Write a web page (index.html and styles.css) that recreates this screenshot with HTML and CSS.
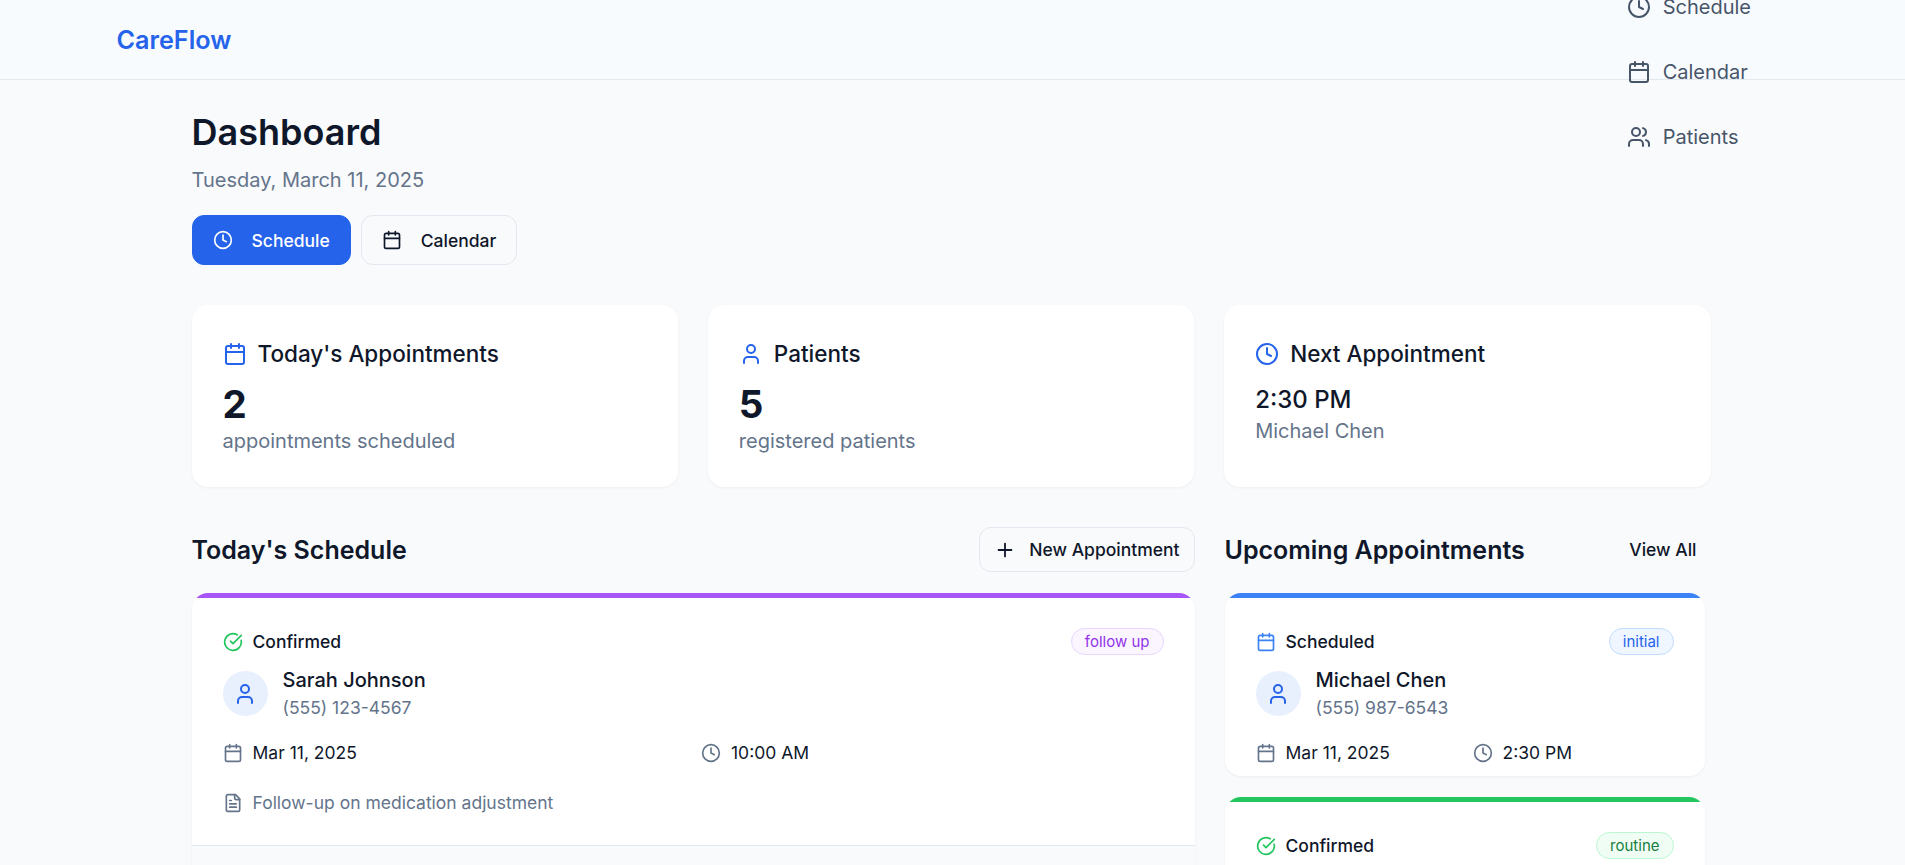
FILE: index.html
```html
<!DOCTYPE html>
<html lang="en">
<head>
	<meta charset="utf-8">
	<title>CareFlow</title>
	<link rel="stylesheet" href="styles.css">
</head>
<body>
	<svg class="iconDefs" aria-hidden="true">
		<symbol id="iClock" viewBox="0 0 24 24"><circle cx="12" cy="12" r="10"/><path d="M12 6v6l4 2"/></symbol>
		<symbol id="iCalendar" viewBox="0 0 24 24"><path d="M8 2v4"/><path d="M16 2v4"/><rect x="3" y="4" width="18" height="18" rx="2"/><path d="M3 10h18"/></symbol>
		<symbol id="iUsers" viewBox="0 0 24 24"><path d="M16 21v-2a4 4 0 0 0-4-4H6a4 4 0 0 0-4 4v2"/><circle cx="9" cy="7" r="4"/><path d="M22 21v-2a4 4 0 0 0-3-3.87"/><path d="M16 3.13a4 4 0 0 1 0 7.75"/></symbol>
		<symbol id="iUser" viewBox="0 0 24 24"><path d="M19 21v-2a4 4 0 0 0-4-4H9a4 4 0 0 0-4 4v2"/><circle cx="12" cy="7" r="4"/></symbol>
		<symbol id="iCheck" viewBox="0 0 24 24"><path d="M21.801 10A10 10 0 1 1 17 3.335"/><path d="m9 11 3 3L22 4"/></symbol>
		<symbol id="iFile" viewBox="0 0 24 24"><path d="M15 2H6a2 2 0 0 0-2 2v16a2 2 0 0 0 2 2h12a2 2 0 0 0 2-2V7Z"/><path d="M14 2v4a2 2 0 0 0 2 2h4"/><path d="M10 9H8"/><path d="M16 13H8"/><path d="M16 17H8"/></symbol>
		<symbol id="iPlus" viewBox="0 0 24 24"><path d="M5 12h14"/><path d="M12 5v14"/></symbol>
	</svg>

	<header class="topBar">
		<div class="brand">CareFlow</div>
		<nav class="topNav">
			<a class="navItem"><svg class="icon icon24"><use href="#iClock"/></svg>Schedule</a>
			<a class="navItem"><svg class="icon icon24"><use href="#iCalendar"/></svg>Calendar</a>
			<a class="navItem"><svg class="icon icon24"><use href="#iUsers"/></svg>Patients</a>
		</nav>
	</header>

	<main class="page">
		<h1 class="pageTitle">Dashboard</h1>
		<p class="pageDate">Tuesday, March 11, 2025</p>
		<div class="tabs">
			<button class="tab tabActive"><svg class="icon icon20"><use href="#iClock"/></svg>Schedule</button>
			<button class="tab"><svg class="icon icon20"><use href="#iCalendar"/></svg>Calendar</button>
		</div>

		<section class="stats">
			<div class="stat">
				<div class="statHead"><svg class="icon icon24 blue"><use href="#iCalendar"/></svg>Today's Appointments</div>
				<div class="statNum">2</div>
				<div class="statSub">appointments scheduled</div>
			</div>
			<div class="stat">
				<div class="statHead"><svg class="icon icon24 blue"><use href="#iUser"/></svg>Patients</div>
				<div class="statNum">5</div>
				<div class="statSub">registered patients</div>
			</div>
			<div class="stat">
				<div class="statHead"><svg class="icon icon24 blue"><use href="#iClock"/></svg>Next Appointment</div>
				<div class="statTime">2:30 PM</div>
				<div class="statSub">Michael Chen</div>
			</div>
		</section>

		<section class="columns">
			<div class="colLeft">
				<div class="colHead">
					<h2>Today's Schedule</h2>
					<button class="newBtn"><svg class="icon icon22"><use href="#iPlus"/></svg>New Appointment</button>
				</div>
				<div class="appt apptPurple">
					<div class="apptBody">
						<div class="apptTop">
							<span class="status"><svg class="icon icon20 green"><use href="#iCheck"/></svg>Confirmed</span>
							<span class="pill pillPurple">follow up</span>
						</div>
						<div class="person">
							<span class="avatar"><svg class="icon icon24 blue"><use href="#iUser"/></svg></span>
							<div>
								<div class="personName">Sarah Johnson</div>
								<div class="personPhone">(555) 123-4567</div>
							</div>
						</div>
						<div class="when">
							<span class="whenItem"><svg class="icon icon20 slate"><use href="#iCalendar"/></svg>Mar 11, 2025</span>
							<span class="whenItem"><svg class="icon icon20 slate"><use href="#iClock"/></svg>10:00 AM</span>
						</div>
						<div class="note"><svg class="icon icon20 slate"><use href="#iFile"/></svg>Follow-up on medication adjustment</div>
					</div>
					<div class="apptFoot"></div>
				</div>
			</div>

			<div class="colRight">
				<div class="colHead colHeadRight">
					<h2>Upcoming Appointments</h2>
					<button class="linkBtn">View All</button>
				</div>
				<div class="upcoming">
					<div class="appt apptBlue apptShort">
						<div class="apptBody">
							<div class="apptTop">
								<span class="status"><svg class="icon icon20 blueLight"><use href="#iCalendar"/></svg>Scheduled</span>
								<span class="pill pillBlue">initial</span>
							</div>
							<div class="person">
								<span class="avatar"><svg class="icon icon24 blue"><use href="#iUser"/></svg></span>
								<div>
									<div class="personName">Michael Chen</div>
									<div class="personPhone">(555) 987-6543</div>
								</div>
							</div>
							<div class="when">
								<span class="whenItem"><svg class="icon icon20 slate"><use href="#iCalendar"/></svg>Mar 11, 2025</span>
								<span class="whenItem"><svg class="icon icon20 slate"><use href="#iClock"/></svg>2:30 PM</span>
							</div>
						</div>
					</div>
					<div class="appt apptGreen apptShort">
						<div class="apptBody">
							<div class="apptTop">
								<span class="status"><svg class="icon icon20 green"><use href="#iCheck"/></svg>Confirmed</span>
								<span class="pill pillGreen">routine</span>
							</div>
						</div>
					</div>
				</div>
			</div>
		</section>
	</main>
</body>
</html>
```

FILE: styles.css
```css
* {
	box-sizing: border-box;
}

html, body {
	height: 100%;
	overflow: hidden;
}

body {
	margin: 0;
	background-color: #f9fafc;
	color: #0f172a;
	font-family: Inter, "Liberation Sans", sans-serif;
}

h1, h2, p {
	margin: 0;
}

.iconDefs {
	display: none;
}

.icon {
	flex: none;
	fill: none;
	stroke: currentColor;
	stroke-width: 2;
	stroke-linecap: round;
	stroke-linejoin: round;
}

.icon24 {
	width: 24px;
	height: 24px;
}

.icon22 {
	width: 22px;
	height: 22px;
}

.icon20 {
	width: 20px;
	height: 20px;
}

.blue {
	color: #2563eb;
}

.blueLight {
	color: #3b82f6;
}

.green {
	color: #22c55e;
}

.slate {
	color: #64748b;
}

/* top bar */
.topBar {
	display: flex;
	justify-content: space-between;
	align-items: flex-start;
	height: 80px;
	padding: 0 154px 0 116.5px;
	background-color: #f8fbfe;
	border-bottom: 1px solid #e2e8f0;
}

.brand {
	margin-top: 23.5px;
	color: #2563eb;
	font-size: 25.2px;
	font-weight: 600;
	line-height: 32px;
}

.topNav {
	display: flex;
	flex-direction: column;
	gap: 16px;
	margin-top: -18px;
}

.navItem {
	display: flex;
	align-items: center;
	gap: 12px;
	height: 49px;
	color: #475569;
	font-size: 20px;
}

/* page */
.page {
	width: 1519px;
	margin-left: 191.5px;
	padding-top: 30px;
}

.pageTitle {
	font-size: 36px;
	font-weight: 600;
	line-height: 44px;
}

.pageDate {
	margin-top: 12px;
	color: #64748b;
	font-size: 20px;
	line-height: 28px;
}

.tabs {
	display: flex;
	gap: 10px;
	margin-top: 21px;
}

.tab {
	display: flex;
	align-items: center;
	gap: 19px;
	height: 50px;
	padding: 0 20px 0 20px;
	background-color: transparent;
	border: 1px solid #e2e8f0;
	border-radius: 12px;
	color: #0f172a;
	font: 500 17.5px Inter, sans-serif;
}

.tabActive {
	background-color: #2563eb;
	border-color: #2563eb;
	color: #fff;
}

/* stat cards */
.stats {
	display: grid;
	grid-template-columns: repeat(3, 1fr);
	gap: 30px;
	margin-top: 40px;
}

.stat {
	height: 182px;
	padding: 31px;
	background-color: #fff;
	border-radius: 16px;
	box-shadow: 0 1px 3px rgba(15, 23, 42, 0.05);
}

.statHead {
	display: flex;
	align-items: center;
	gap: 11px;
	font-size: 22.5px;
	font-weight: 500;
	line-height: 36px;
}

.statNum {
	margin-top: 8px;
	font-size: 38.5px;
	font-weight: 700;
	line-height: 48px;
}

.statSub {
	color: #64748b;
	font-size: 20px;
	line-height: 27px;
}

.statTime {
	margin: 12px 0 2px;
	font-size: 24px;
	font-weight: 500;
	line-height: 32px;
}

/* two columns */
.columns {
	display: grid;
	grid-template-columns: 1003px 486px;
	gap: 30px;
	margin-top: 40px;
}

.colHead {
	display: flex;
	justify-content: space-between;
	align-items: center;
	height: 45px;
	margin-bottom: 21px;
}

.colHead h2 {
	font-size: 25px;
	font-weight: 600;
}

.colHeadRight {
	padding-right: 14px;
}

.newBtn {
	display: flex;
	align-items: center;
	gap: 13px;
	height: 45px;
	padding: 0 14px;
	background-color: transparent;
	border: 1px solid #e2e8f0;
	border-radius: 12px;
	color: #0f172a;
	font: 500 17.5px Inter, sans-serif;
}

.linkBtn {
	padding: 0;
	background: none;
	border: 0;
	color: #0f172a;
	font: 500 17.5px Inter, sans-serif;
}

.upcoming {
	display: flex;
	flex-direction: column;
	gap: 21px;
	padding-right: 6px;
}

/* appointment cards */
.appt {
	background-color: #fff;
	border-radius: 16px;
	box-shadow: 0 1px 3px rgba(15, 23, 42, 0.05);
	overflow: hidden;
}

.appt::before {
	content: "";
	display: block;
	height: 5px;
}

.apptShort {
	height: 183px;
}

.apptPurple::before {
	background-color: #a855f7;
}

.apptBlue::before {
	background-color: #3b82f6;
}

.apptGreen::before {
	background-color: #22c55e;
}

.apptBody {
	padding: 30px 31px 28px;
}

.apptFoot {
	height: 60px;
	background-color: #f9fafc;
	border-top: 1px solid #e2e8f0;
}

.apptTop {
	display: flex;
	justify-content: space-between;
	align-items: center;
	height: 27px;
}

.status {
	display: flex;
	align-items: center;
	gap: 10px;
	font-size: 17.5px;
	font-weight: 500;
}

.pill {
	padding: 0 13px;
	border: 1px solid;
	border-radius: 14px;
	font-size: 15px;
	line-height: 25px;
}

.pillPurple {
	background-color: #faf5ff;
	border-color: #e9d5ff;
	color: #9333ea;
}

.pillBlue {
	background-color: #eff6ff;
	border-color: #bfdbfe;
	color: #2563eb;
}

.pillGreen {
	background-color: #f0fdf4;
	border-color: #bbf7d0;
	color: #15803d;
}

.person {
	display: flex;
	align-items: center;
	gap: 15px;
	margin-top: 11px;
}

.avatar {
	display: flex;
	justify-content: center;
	align-items: center;
	width: 45px;
	height: 45px;
	background-color: #e8effd;
	border-radius: 50%;
}

.personName {
	font-size: 20px;
	font-weight: 500;
	line-height: 28px;
}

.personPhone {
	margin-top: 1px;
	color: #64748b;
	font-size: 17.5px;
	line-height: 26px;
}

.when {
	display: grid;
	grid-template-columns: 1fr 1fr;
	gap: 16px;
	margin-top: 18px;
}

.whenItem {
	display: flex;
	align-items: center;
	gap: 10px;
	font-size: 17.5px;
	line-height: 28px;
}

.note {
	display: flex;
	align-items: center;
	gap: 10px;
	margin-top: 22px;
	color: #64748b;
	font-size: 17.5px;
	line-height: 28px;
}
```
